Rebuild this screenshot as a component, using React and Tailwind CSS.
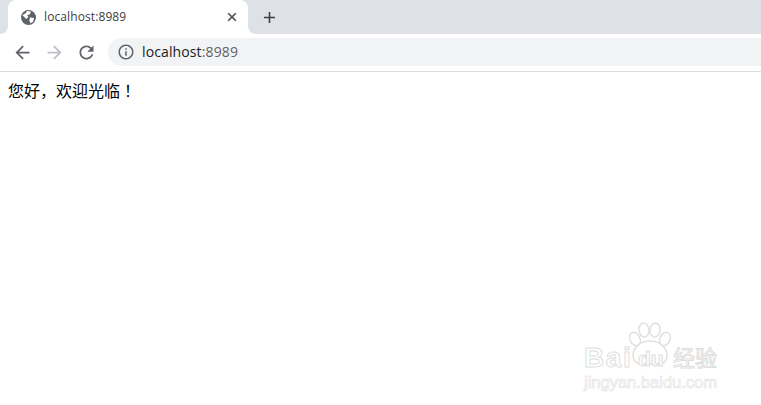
function Globe() {
  return (
    <svg width="15" height="15" viewBox="0 0 16 16" className="shrink-0">
      <circle cx="8" cy="8" r="8" fill="#5f6368" />
      <path d="M1.5 5.5 L5 3.5 L6.5 1 L10.5 1.5 L9.5 4.5 L6.5 5.5 L8 7.5 L5.5 9.5 L3.5 7.5 Z" fill="#fff" />
      <path d="M9.5 8 L14 8.5 L13 12 L10 14.5 L9 11 Z" fill="#fff" />
    </svg>
  );
}

function Icon({ d, size = 21, className, stroke }) {
  return (
    <svg width={size} height={size} viewBox="0 0 24 24" fill="currentColor" stroke={stroke} strokeWidth={stroke ? 1 : 0} className={className}>
      <path d={d} />
    </svg>
  );
}

const BACK = "M20 11H7.83l5.59-5.59L12 4l-8 8 8 8 1.41-1.41L7.83 13H20v-2z";
const FORWARD = "M4 11h12.17l-5.59-5.59L12 4l8 8-8 8-1.41-1.41L16.17 13H4v-2z";
const RELOAD = "M17.65 6.35C16.2 4.9 14.21 4 12 4c-4.42 0-7.99 3.58-7.99 8s3.57 8 7.99 8c3.73 0 6.84-2.55 7.73-6h-2.08c-.82 2.33-3.04 4-5.65 4-3.31 0-6-2.69-6-6s2.69-6 6-6c1.66 0 3.14.69 4.22 1.78L13 11h7V4l-2.35 2.35z";
const CLOSE = "M19 6.41 17.59 5 12 10.59 6.41 5 5 6.41 10.59 12 5 17.59 6.41 19 12 13.41 17.59 19 19 17.59 13.41 12z";
const PLUS = "M19 13h-6v6h-2v-6H5v-2h6V5h2v6h6v2z";
const INFO = "M11 7h2v2h-2zm0 4h2v6h-2zm1-9C6.48 2 2 6.48 2 12s4.48 10 10 10 10-4.48 10-10S17.52 2 12 2zm0 18c-4.41 0-8-3.59-8-8s3.59-8 8-8 8 3.59 8 8-3.59 8-8 8z";

function Watermark() {
  return (
    <div className="absolute left-[584px] top-[322px] w-[136px] h-[70px] select-none">
      <svg width="48" height="46" viewBox="0 0 48 46" className="absolute left-[43px] top-0" fill="#fff" stroke="#e0e0e0" strokeWidth="1.5">
        <ellipse cx="8" cy="17" rx="5" ry="7" transform="rotate(-25 8 17)" />
        <ellipse cx="17" cy="8" rx="5" ry="7" transform="rotate(-8 17 8)" />
        <ellipse cx="28" cy="8" rx="5" ry="7" transform="rotate(8 28 8)" />
        <ellipse cx="38" cy="17" rx="5" ry="7" transform="rotate(25 38 17)" />
        <path d="M23 19 C33 19 40 26 40 33 C40 43 31 43 23 42 C15 43 6 43 6 33 C6 26 13 19 23 19 Z" />
      </svg>
      <span className="absolute left-0 top-[22px] text-[28px] leading-[28px] tracking-[1.6px] font-bold text-white [-webkit-text-stroke:1px_#dedede] font-['Liberation_Sans',sans-serif]">Bai</span>
      <span className="absolute left-[54px] top-[26px] text-[21px] leading-[22px] font-bold text-white [-webkit-text-stroke:1px_#dedede] font-['Liberation_Sans',sans-serif]">du</span>
      <span className="absolute left-[89px] top-[20px] text-[22px] leading-[28px] text-white [-webkit-text-stroke:1px_#dedede] font-['Noto_Sans_CJK_SC',sans-serif] whitespace-nowrap">经验</span>
      <span className="absolute left-0 top-[51px] text-[16.5px] leading-[18px] text-white [-webkit-text-stroke:0.7px_#e4e4e4] font-['Liberation_Sans',sans-serif] whitespace-nowrap">jingyan.baidu.com</span>
    </div>
  );
}

export default function App() {
  return (
    <div className="relative min-h-[405px] bg-white overflow-hidden font-['Open_Sans',sans-serif]">
      <div className="flex items-end h-[34px] pl-2 bg-[#dee1e6]">
        <div className="relative flex items-center w-[240px] h-[34px] pl-[13px] pr-[9px] bg-white rounded-t-lg">
          <span className="absolute -left-2 bottom-0 w-2 h-2 bg-white" />
          <span className="absolute -left-2 bottom-0 w-2 h-2 bg-[#dee1e6] rounded-br-lg" />
          <span className="absolute -right-2 bottom-0 w-2 h-2 bg-white" />
          <span className="absolute -right-2 bottom-0 w-2 h-2 bg-[#dee1e6] rounded-bl-lg" />
          <Globe />
          <span className="ml-[8px] text-[12px] leading-none text-[#3c4043] tracking-[0.1px] whitespace-nowrap">localhost:8989</span>
          <Icon d={CLOSE} size={14} stroke="currentColor" className="ml-auto text-[#4d5155]" />
        </div>
        <Icon d={PLUS} size={19} className="ml-[12px] mb-[7px] text-[#3c4043]" />
      </div>

      <div className="flex items-center h-[38px] pl-[6px] pb-px border-b border-[#dadce0] bg-white">
        <div className="flex justify-center w-8">
          <Icon d={BACK} className="text-[#5f6368]" />
        </div>
        <div className="flex justify-center w-8">
          <Icon d={FORWARD} className="text-[#bdc1c6]" />
        </div>
        <div className="flex justify-center w-8">
          <Icon d={RELOAD} className="text-[#5f6368]" />
        </div>
        <div className="flex items-center flex-1 h-7 ml-[6px] pl-[9px] rounded-l-full bg-[#f1f3f4]">
          <Icon d={INFO} size={18} className="text-[#5f6368]" />
          <span className="ml-[7px] text-[14px] leading-none tracking-[0.12px] text-[#202124] whitespace-nowrap">
            localhost<span className="text-[#5f6368]">:8989</span>
          </span>
        </div>
      </div>

      <p className="pl-2 pt-2 text-[16px] leading-[20px] text-black font-['Noto_Sans_CJK_KR',sans-serif]">您好，欢迎光临！</p>

      <Watermark />
    </div>
  );
}
